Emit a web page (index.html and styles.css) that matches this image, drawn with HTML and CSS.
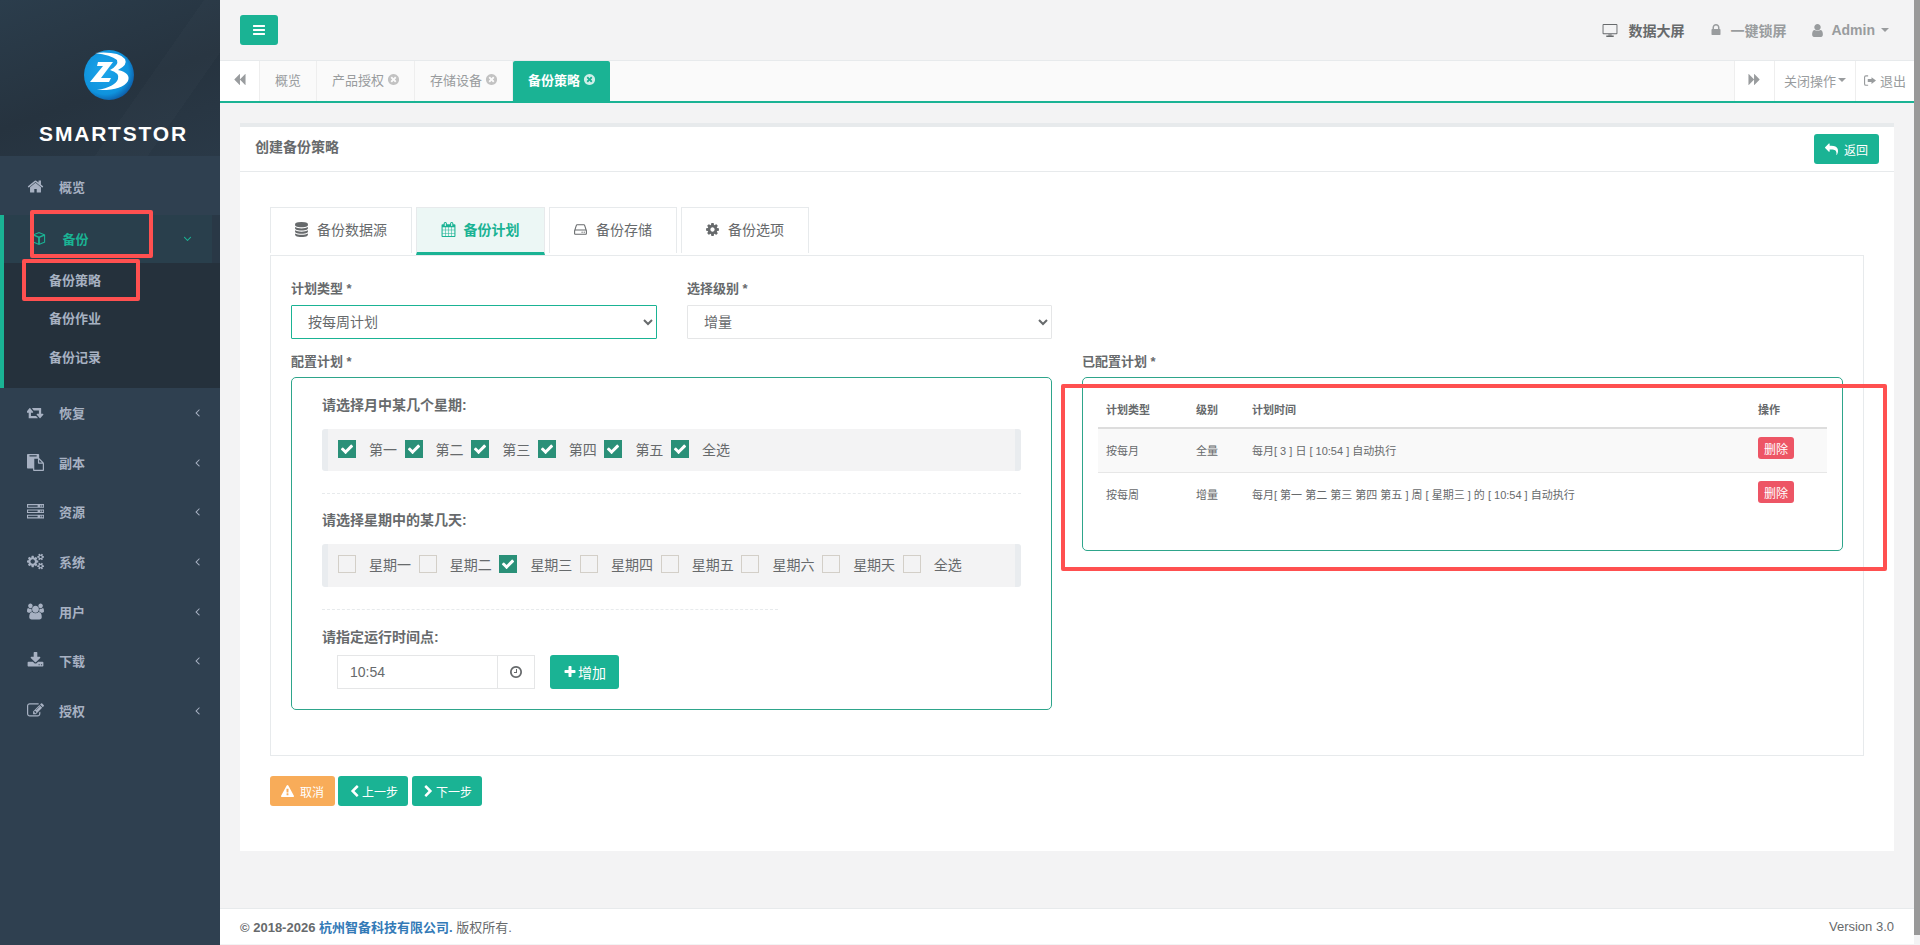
FILE: index.html
```html
<!DOCTYPE html>
<html lang="zh">
<head>
<meta charset="utf-8">
<title>SMARTSTOR</title>
<link rel="stylesheet" href="styles.css">
</head>
<body>
<svg class="defs" xmlns="http://www.w3.org/2000/svg">
  <symbol id="i-bars" viewBox="0 0 1792 1792"><path d="M1664 1344v128q0 26-19 45t-45 19h-1408q-26 0-45-19t-19-45v-128q0-26 19-45t45-19h1408q26 0 45 19t19 45zm0-512v128q0 26-19 45t-45 19h-1408q-26 0-45-19t-19-45v-128q0-26 19-45t45-19h1408q26 0 45 19t19 45zm0-512v128q0 26-19 45t-45 19h-1408q-26 0-45-19t-19-45v-128q0-26 19-45t45-19h1408q26 0 45 19t19 45z"/></symbol>
  <symbol id="i-home" viewBox="0 0 1792 1792"><path d="M1472 992v480q0 26-19 45t-45 19h-384v-384h-256v384h-384q-26 0-45-19t-19-45v-480q0-1 .5-3t.5-3l575-474 575 474q1 2 1 6zm223-69l-62 74q-8 9-21 11h-3q-13 0-21-7l-692-577-692 577q-12 8-24 7-13-2-21-11l-62-74q-8-10-7-23.500t11-21.500l719-599q32-26 76-26t76 26l244 204v-195q0-14 9-23t23-9h192q14 0 23 9t9 23v408l219 182q10 8 11 21.500t-7 23.500z"/></symbol>
  <symbol id="i-angle-left" viewBox="0 0 1792 1792"><path d="M1203 544q0 13-10 23l-393 393 393 393q10 10 10 23t-10 23l-50 50q-10 10-23 10t-23-10l-466-466q-10-10-10-23t10-23l466-466q10-10 23-10t23 10l50 50q10 10 10 23z"/></symbol>
  <symbol id="i-angle-down" viewBox="0 0 1792 1792"><path d="M1395 736q0 13-10 23l-466 466q-10 10-23 10t-23-10l-466-466q-10-10-10-23t10-23l50-50q10-10 23-10t23 10l393 393 393-393q10-10 23-10t23 10l50 50q10 10 10 23z"/></symbol>
  <symbol id="i-chevron-left" viewBox="0 0 1792 1792"><path d="M1427 301l-531 531 531 531q19 19 19 45t-19 45l-166 166q-19 19-45 19t-45-19l-742-742q-19-19-19-45t19-45l742-742q19-19 45-19t45 19l166 166q19 19 19 45t-19 45z"/></symbol>
  <symbol id="i-chevron-right" viewBox="0 0 1792 1792"><path d="M1363 877l-742 742q-19 19-45 19t-45-19l-166-166q-19-19-19-45t19-45l531-531-531-531q-19-19-19-45t19-45l166-166q19-19 45-19t45 19l742 742q19 19 19 45t-19 45z"/></symbol>
  <symbol id="i-plus" viewBox="0 0 1792 1792"><path d="M1600 736v192q0 40-28 68t-68 28h-416v416q0 40-28 68t-68 28h-192q-40 0-68-28t-28-68v-416h-416q-40 0-68-28t-28-68v-192q0-40 28-68t68-28h416v-416q0-40 28-68t68-28h192q40 0 68 28t28 68v416h416q40 0 68 28t28 68z"/></symbol>
  <symbol id="i-check" viewBox="0 0 1792 1792"><path d="M1671 566q0 40-28 68l-724 724-136 136q-28 28-68 28t-68-28l-136-136-362-362q-28-28-28-68t28-68l136-136q28-28 68-28t68 28l294 295 656-657q28-28 68-28t68 28l136 136q28 28 28 68z"/></symbol>
  <symbol id="i-user" viewBox="0 0 1792 1792"><path d="M1536 1399q0 109-62.500 187t-150.500 78h-854q-88 0-150.500-78t-62.500-187q0-85 8.500-160.500t31.500-152 58.500-131 94-89 134.500-34.500q131 128 313 128t313-128q76 0 134.500 34.500t94 89 58.500 131 31.500 152 8.500 160.500zm-256-887q0 159-112.500 271.500t-271.500 112.500-271.500-112.500-112.500-271.500 112.500-271.500 271.500-112.500 271.500 112.500 112.500 271.500z"/></symbol>
  <symbol id="i-lock" viewBox="0 0 1792 1792"><path d="M640 768h512v-192q0-106-75-181t-181-75-181 75-75 181v192zm832 96v576q0 40-28 68t-68 28h-960q-40 0-68-28t-28-68v-576q0-40 28-68t68-28h32v-192q0-184 132-316t316-132 316 132 132 316v192h32q40 0 68 28t28 68z"/></symbol>
  <symbol id="i-database" viewBox="0 0 1792 1792"><path d="M896 768q237 0 443-43t325-127v170q0 69-103 128t-280 93.500-385 34.500-385-34.500-280-93.500-103-128v-170q119 84 325 127t443 43zm0 768q237 0 443-43t325-127v170q0 69-103 128t-280 93.500-385 34.500-385-34.500-280-93.500-103-128v-170q119 84 325 127t443 43zm0-384q237 0 443-43t325-127v170q0 69-103 128t-280 93.500-385 34.500-385-34.500-280-93.500-103-128v-170q119 84 325 127t443 43zm0-1152q208 0 385 34.500t280 93.500 103 128v128q0 69-103 128t-280 93.500-385 34.500-385-34.500-280-93.500-103-128v-128q0-69 103-128t280-93.500 385-34.500z"/></symbol>
  <symbol id="i-cog" viewBox="0 0 1792 1792"><path d="M1152 896q0-106-75-181t-181-75-181 75-75 181 75 181 181 75 181-75 75-181zm512-109v222q0 12-8 23t-20 13l-185 28q-19 54-39 91 35 50 107 138 10 12 10 25t-9 23q-27 37-99 108t-94 71q-12 0-26-9l-138-108q-44 23-91 38-16 136-29 186-7 28-36 28h-222q-14 0-24.500-8.500t-11.500-21.500l-28-184q-49-16-90-37l-141 107q-10 9-25 9-14 0-25-11-126-114-165-168-7-10-7-23 0-12 8-23 15-21 51-66.500t54-70.500q-27-50-41-99l-183-27q-13-2-21-12.500t-8-23.500v-222q0-12 8-23t19-13l186-28q14-46 39-92-40-57-107-138-10-12-10-24 0-10 9-23 26-36 98.500-107.500t94.500-71.500q13 0 26 10l138 107q44-23 91-38 16-136 29-186 7-28 36-28h222q14 0 24.500 8.500t11.500 21.500l28 184q49 16 90 37l142-107q9-9 24-9 13 0 25 10 129 119 165 170 7 8 7 22 0 12-8 23-15 21-51 66.500t-54 70.500q26 50 41 98l183 28q13 2 21 12.500t8 23.500z"/></symbol>
  <symbol id="i-warning" viewBox="0 0 1792 1792"><path d="M1024 1375v-190q0-14-9.500-23.500t-22.500-9.500h-192q-13 0-22.500 9.500t-9.500 23.500v190q0 14 9.500 23.500t22.500 9.500h192q13 0 22.500-9.500t9.500-23.500zm-2-374l18-459q0-12-10-19-13-11-24-11h-220q-11 0-24 11-10 7-10 21l17 457q0 10 10 16.500t24 6.500h185q14 0 23.500-6.500t10.500-16.500zm-14-934l768 1408q35 63-2 126-17 29-46.500 46t-63.500 17h-1536q-34 0-63.500-17t-46.500-46q-37-63-2-126l768-1408q17-31 47-49t65-18 65 18 47 49z"/></symbol>
  <symbol id="i-reply" viewBox="0 0 1792 1792"><path d="M1792 1120q0 166-127 451-3 7-10.500 24t-13.500 30-13 22q-12 17-28 17-15 0-23.500-10t-8.500-25q0-9 2.500-26.500t2.500-23.500q5-68 5-123 0-101-17.500-181t-48.500-138.500-80-101-105.500-69.500-133-42.500-154-21.500-175.500-6h-224v256q0 26-19 45t-45 19-45-19l-512-512q-19-19-19-45t19-45l512-512q19-19 45-19t45 19 19 45v256h224q713 0 875 403 53 134 53 333z"/></symbol>
  <symbol id="i-close" viewBox="0 0 1792 1792"><path d="M1277 1122q0-26-19-45l-181-181 181-181q19-19 19-45 0-27-19-46l-90-90q-19-19-46-19-26 0-45 19l-181 181-181-181q-19-19-45-19-27 0-46 19l-90 90q-19 19-19 46 0 26 19 45l181 181-181 181q-19 19-19 45 0 27 19 46l90 90q19 19 46 19 26 0 45-19l181-181 181 181q19 19 45 19 27 0 46-19l90-90q19-19 19-46zm387-226q0 209-103 385.500t-279.500 279.500-385.500 103-385.500-103-279.500-279.500-103-385.500 103-385.500 279.500-279.500 385.500-103 385.500 103 279.500 279.500 103 385.500z"/></symbol>
  <symbol id="i-calendar" viewBox="0 0 1792 1792"><path d="M192 1664h288v-288h-288v288zm352 0h320v-288h-320v288zm-352-352h288v-320h-288v320zm352 0h320v-320h-320v320zm-352-384h288v-288h-288v288zm736 736h320v-288h-320v288zm-384-736h320v-288h-320v288zm768 736h288v-288h-288v288zm-384-352h320v-320h-320v320zm-352-864v-288q0-13-9.500-22.500t-22.500-9.500h-64q-13 0-22.500 9.500t-9.500 22.500v288q0 13 9.500 22.500t22.500 9.500h64q13 0 22.500-9.500t9.500-22.500zm736 864h288v-320h-288v320zm-384-384h320v-288h-320v288zm384 0h288v-288h-288v288zm32-480v-288q0-13-9.500-22.500t-22.500-9.500h-64q-13 0-22.500 9.500t-9.500 22.500v288q0 13 9.500 22.500t22.500 9.500h64q13 0 22.500-9.500t9.500-22.500zm384-64v1280q0 52-38 90t-90 38h-1408q-52 0-90-38t-38-90v-1280q0-52 38-90t90-38h128v-96q0-66 47-113t113-47h64q66 0 113 47t47 113v96h384v-96q0-66 47-113t113-47h64q66 0 113 47t47 113v96h128q52 0 90 38t38 90z"/></symbol>
  <symbol id="i-backward" viewBox="0 0 1792 1792"><path d="M1683 141q19-19 32-13t13 32v1472q0 26-13 32t-32-13l-710-710q-9-9-13-19v710q0 26-13 32t-32-13l-710-710q-19-19-19-45t19-45l710-710q19-19 32-13t13 32v710q4-10 13-19z"/></symbol>
  <symbol id="i-forward" viewBox="0 0 1792 1792"><path d="M109 1651q-19 19-32 13t-13-32v-1472q0-26 13-32t32 13l710 710q9 9 13 19v-710q0-26 13-32t32 13l710 710q19 19 19 45t-19 45l-710 710q-19 19-32 13t-13-32v-710q-4 10-13 19z"/></symbol>
  <symbol id="i-desktop" viewBox="0 0 16 14"><path d="M1 0h14q1 0 1 1v9q0 1-1 1H9.500v1.500H12V14H4v-1.500h2.500V11H1q-1 0-1-1V1q0-1 1-1zM1 1v9h14V1zM7.500 11v1.500h1V11z" fill-rule="evenodd"/></symbol>
  <symbol id="i-hdd" viewBox="0 0 1792 1792"><path d="M1168 1216q0 33-23.500 56.500t-56.500 23.500-56.500-23.500-23.500-56.500 23.500-56.500 56.500-23.500 56.500 23.500 23.500 56.500zm256 0q0 33-23.500 56.500t-56.500 23.500-56.500-23.500-23.500-56.500 23.500-56.500 56.500-23.500 56.500 23.500 23.500 56.500zm112 160v-320q0-13-9.500-22.500t-22.500-9.500h-1216q-13 0-22.500 9.500t-9.500 22.500v320q0 13 9.500 22.500t22.500 9.500h1216q13 0 22.500-9.500t9.500-22.500zm-1230-480h1180l-157-482q-4-13-16-21.500t-26-8.500h-782q-14 0-26 8.500t-16 21.500zm1358 160v320q0 66-47 113t-113 47h-1216q-66 0-113-47t-47-113v-320q0-25 16-75l197-606q17-53 63-86t101-33h782q55 0 101 33t63 86l197 606q16 50 16 75z"/></symbol>
  <symbol id="i-clock" viewBox="0 0 1792 1792"><path d="M1024 544v448q0 14-9 23t-23 9h-320q-14 0-23-9t-9-23v-64q0-14 9-23t23-9h224v-352q0-14 9-23t23-9h64q14 0 23 9t9 23zm416 352q0-148-73-273t-198-198-273-73-273 73-198 198-73 273 73 273 198 198 273 73 273-73 198-198 73-273zm224 0q0 209-103 385.500t-279.500 279.500-385.500 103-385.500-103-279.500-279.500-103-385.500 103-385.500 279.500-279.500 385.500-103 385.500 103 279.500 279.500 103 385.500z"/></symbol>
  <symbol id="i-cube" viewBox="0 0 16 16"><path d="M8 .5 15 3.500v9L8 15.500 1 12.500v-9zM3.200 3.800 8 5.800l4.800-2L8 1.900zM9 7.200v6.500l4.800-2.100V5.200zM2.300 5.200v6.400L7 13.600V7.200z" fill-rule="evenodd"/></symbol>
  <symbol id="i-retweet" viewBox="0 0 1920 1792"><path d="M1216 1520q0 13-9.500 22.500t-22.500 9.500h-960q-8 0-13.500-2t-9-7-5.500-8-3-11.500-1-11.500v-600h-192q-26 0-45-19t-19-45q0-24 15-41l320-384q19-22 49-22t49 22l320 384q15 17 15 41 0 26-19 45t-45 19h-192v384h576q16 0 25 11l160 192q7 10 7 21zm640-416q0 24-15 41l-320 384q-20 23-49 23t-49-23l-320-384q-15-17-15-41 0-26 19-45t45-19h192v-384h-576q-16 0-25-12l-160-192q-7-9-7-20 0-13 9.500-22.500t22.500-9.500h960q8 0 13.500 2t9 7 5.500 8 3 11.500 1 11.500v600h192q26 0 45 19t19 45z"/></symbol>
  <symbol id="i-files" viewBox="0 0 1792 1792"><path d="M768 1664h896v-640h-416q-40 0-68-28t-28-68v-416h-384v1152zm256-1440v-64q0-13-9.500-22.500t-22.500-9.500h-704q-13 0-22.500 9.500t-9.500 22.500v64q0 13 9.500 22.500t22.500 9.500h704q13 0 22.500-9.500t9.500-22.500zm256 672h299l-299-299v299zm512 128v672q0 40-28 68t-68 28h-960q-40 0-68-28t-28-68v-160h-544q-40 0-68-28t-28-68v-1344q0-40 28-68t68-28h1088q40 0 68 28t28 68v328q21 13 36 28l408 408q28 28 48 76t20 88z"/></symbol>
  <symbol id="i-server" viewBox="0 0 16 14"><path d="M0 0h16v3.500H0zM0 5h16v3.500H0zM0 10h16v3.500H0zM1 1h9v1.500H1zM12.500 1v1.500h1V1zM14.200 1v1.500h1V1zM1 6h9v1.500H1zM12.500 6v1.500h1V6zM14.200 6v1.500h1V6zM1 11h9v1.500H1zM12.500 11v1.500h1V11zM14.200 11v1.500h1V11z" fill-rule="evenodd"/></symbol>
  <symbol id="i-users" viewBox="0 0 1920 1792"><path d="M593 896q-162 5-265 128h-134q-82 0-138-40.500t-56-118.500q0-353 124-353 6 0 43.500 21t97.500 42.500 119 21.500q67 0 133-23-5 37-5 66 0 139 81 256zm1071 637q0 120-73 189.500t-194 69.500h-874q-121 0-194-69.500t-73-189.500q0-53 3.500-103.500t14-109 26.500-108.500 43-97.500 62-81 85.500-53.500 111.500-20q10 0 43 21.500t73 48 107 48 135 21.500 135-21.500 107-48 73-48 43-21.500q61 0 111.500 20t85.500 53.500 62 81 43 97.500 26.500 108.500 14 109 3.500 103.500zm-1024-1277q0 106-75 181t-181 75-181-75-75-181 75-181 181-75 181 75 75 181zm704 384q0 159-112.500 271.500t-271.500 112.500-271.500-112.500-112.500-271.500 112.500-271.500 271.500-112.500 271.500 112.500 112.500 271.500zm576 225q0 78-56 118.500t-138 40.500h-134q-103-123-265-128 81-117 81-256 0-29-5-66 66 23 133 23 59 0 119-21.500t97.500-42.500 43.500-21q124 0 124 353zm-128-609q0 106-75 181t-181 75-181-75-75-181 75-181 181-75 181 75 75 181z"/></symbol>
  <symbol id="i-download" viewBox="0 0 1792 1792"><path d="M1344 1344q0-26-19-45t-45-19-45 19-19 45 19 45 45 19 45-19 19-45zm256 0q0-26-19-45t-45-19-45 19-19 45 19 45 45 19 45-19 19-45zm128-224v320q0 40-28 68t-68 28h-1472q-40 0-68-28t-28-68v-320q0-40 28-68t68-28h465l135 136q58 56 136 56t136-56l136-136h464q40 0 68 28t28 68zm-325-569q17 41-14 70l-448 448q-18 19-45 19t-45-19l-448-448q-31-29-14-70 17-39 59-39h256v-448q0-26 19-45t45-19h256q26 0 45 19t19 45v448h256q42 0 59 39z"/></symbol>
  <symbol id="i-edit" viewBox="0 0 1792 1792"><path d="M888 1184l116-116-152-152-116 116v56h96v96h56zm440-720q-16-16-33 1l-350 350q-17 17-1 33t33-1l350-350q17-17 1-33zm80 594v190q0 119-84.500 203.500t-203.500 84.500h-832q-119 0-203.500-84.500t-84.500-203.500v-832q0-119 84.500-203.500t203.500-84.500h832q63 0 117 25 15 7 18 23 3 17-9 29l-49 49q-14 14-32 8-23-6-45-6h-832q-66 0-113 47t-47 113v832q0 66 47 113t113 47h832q66 0 113-47t47-113v-126q0-13 9-22l64-64q15-15 35-7t20 29zm-96-738l288 288-672 672h-288v-288zm444 132l-92 92-288-288 92-92q28-28 68-28t68 28l152 152q28 28 28 68t-28 68z"/></symbol>
  <symbol id="i-cogs" viewBox="0 0 1920 1792"><path d="M896 896q0-106-75-181t-181-75-181 75-75 181 75 181 181 75 181-75 75-181zm768 512q0-52-38-90t-90-38-90 38-38 90q0 53 37.500 90.500t90.500 37.500 90.500-37.500 37.500-90.500zm0-1024q0-52-38-90t-90-38-90 38-38 90q0 53 37.500 90.500t90.500 37.500 90.500-37.500 37.500-90.500zm-384 421v185q0 10-7 19.500t-16 10.500l-155 24q-11 35-32 76 34 48 90 115 7 11 7 20 0 12-7 19-23 30-82.500 89.500t-78.500 59.500q-11 0-21-7l-115-90q-37 19-77 31-11 108-23 155-7 24-30 24h-186q-11 0-20-7.500t-10-17.500l-23-153q-34-10-75-31l-118 89q-7 7-20 7-11 0-21-8-144-133-144-160 0-9 7-19 10-14 41-53t47-61q-23-44-35-82l-152-24q-10-1-17-9.500t-7-19.500v-185q0-10 7-19.500t16-10.500l155-24q11-35 32-76-34-48-90-115-7-11-7-20 0-12 7-20 22-30 82-89t79-59q11 0 21 7l115 90q34-18 77-32 11-108 23-154 7-24 30-24h186q11 0 20 7.500t10 17.500l23 153q34 10 75 31l118-89q8-7 20-7 11 0 21 8 144 133 144 160 0 8-7 19-12 16-42 54t-45 60q23 48 34 82l152 23q10 2 17 10.500t7 19.500zm640 533v140q0 16-149 31-12 27-30 52 51 113 51 138 0 4-4 7-122 71-124 71-8 0-46-47t-52-68q-20 2-30 2t-30-2q-14 21-52 68t-46 47q-2 0-124-71-4-3-4-7 0-25 51-138-18-25-30-52-149-15-149-31v-140q0-16 149-31 13-29 30-52-51-113-51-138 0-4 4-7 4-2 35-20t59-34 30-16q8 0 46 46.500t52 67.500q20-2 30-2t30 2q51-71 92-112l6-2q4 0 124 70 4 3 4 7 0 25-51 138 17 23 30 52 149 15 149 31zm0-1024v140q0 16-149 31-12 27-30 52 51 113 51 138 0 4-4 7-122 71-124 71-8 0-46-47t-52-68q-20 2-30 2t-30-2q-14 21-52 68t-46 47q-2 0-124-71-4-3-4-7 0-25 51-138-18-25-30-52-149-15-149-31v-140q0-16 149-31 13-29 30-52-51-113-51-138 0-4 4-7 4-2 35-20t59-34 30-16q8 0 46 46.500t52 67.500q20-2 30-2t30 2q51-71 92-112l6-2q4 0 124 70 4 3 4 7 0 25-51 138 17 23 30 52 149 15 149 31z"/></symbol>
  <symbol id="i-signout" viewBox="0 0 16 14"><path d="M5.500 0v1.500H2.500q-1 0-1 1v9q0 1 1 1h3V14H2.500Q0 14 0 11.500v-9Q0 0 2.500 0zM10 2.500 16 7l-6 4.500V9H5V5h5z"/></symbol>
</svg>

<aside class="sidebar">
  <div class="brand">
    <svg class="logo" viewBox="0 0 50 50">
      <defs>
        <radialGradient id="logo-bg" cx=".42" cy=".42" r=".62">
          <stop offset="0" stop-color="#1da5ea"/>
          <stop offset=".75" stop-color="#0f93dd"/>
          <stop offset="1" stop-color="#0e5ba6"/>
        </radialGradient>
      </defs>
      <circle cx="25" cy="25" r="25" fill="url(#logo-bg)"/>
      <path fill="#fff" d="M14 12H29L17 28H27L25 32H6L19 16H13Z"/>
      <path fill="#fff" d="M11 3Q34 1 41 9Q44 15 34 20Q47 23 44 31Q38 41 13 40Q31 37 34 29Q36 23 26 20Q35 15 33 10Q27 5 11 3Z"/>
    </svg>
    <div class="brand-name">SMARTSTOR</div>
  </div>
  <nav class="menu">
    <a class="menu-item"><svg class="ico"><use href="#i-home"/></svg><span>概览</span></a>
    <div class="menu-group">
      <a class="menu-item is-open"><svg class="ico"><use href="#i-cube"/></svg><span>备份</span><svg class="arrow"><use href="#i-angle-down"/></svg></a>
      <div class="submenu">
        <a>备份策略</a>
        <a>备份作业</a>
        <a>备份记录</a>
      </div>
    </div>
    <a class="menu-item"><svg class="ico"><use href="#i-retweet"/></svg><span>恢复</span><svg class="arrow"><use href="#i-angle-left"/></svg></a>
    <a class="menu-item"><svg class="ico"><use href="#i-files"/></svg><span>副本</span><svg class="arrow"><use href="#i-angle-left"/></svg></a>
    <a class="menu-item"><svg class="ico"><use href="#i-server"/></svg><span>资源</span><svg class="arrow"><use href="#i-angle-left"/></svg></a>
    <a class="menu-item"><svg class="ico"><use href="#i-cogs"/></svg><span>系统</span><svg class="arrow"><use href="#i-angle-left"/></svg></a>
    <a class="menu-item"><svg class="ico"><use href="#i-users"/></svg><span>用户</span><svg class="arrow"><use href="#i-angle-left"/></svg></a>
    <a class="menu-item"><svg class="ico"><use href="#i-download"/></svg><span>下载</span><svg class="arrow"><use href="#i-angle-left"/></svg></a>
    <a class="menu-item"><svg class="ico"><use href="#i-edit"/></svg><span>授权</span><svg class="arrow"><use href="#i-angle-left"/></svg></a>
  </nav>
</aside>

<div class="page">
  <header class="topbar">
    <button class="btn btn-bars"><svg><use href="#i-bars"/></svg></button>
    <ul class="top-links">
      <li class="dark"><svg class="screen"><use href="#i-desktop"/></svg>数据大屏</li>
      <li><svg class="lock"><use href="#i-lock"/></svg>一键锁屏</li>
      <li><svg class="usr"><use href="#i-user"/></svg>Admin<i class="caret"></i></li>
    </ul>
  </header>

  <div class="tabbar">
    <button class="tab-nav"><svg><use href="#i-backward"/></svg></button>
    <div class="page-tabs">
      <a>概览</a>
      <a>产品授权<svg><use href="#i-close"/></svg></a>
      <a>存储设备<svg><use href="#i-close"/></svg></a>
      <a class="active">备份策略<svg><use href="#i-close"/></svg></a>
    </div>
    <button class="tab-nav right"><svg><use href="#i-forward"/></svg></button>
    <div class="tab-action">关闭操作<i class="caret"></i></div>
    <div class="tab-action exit"><svg><use href="#i-signout"/></svg>退出</div>
  </div>

  <main class="content">
    <section class="card">
      <div class="card-title">
        <h5>创建备份策略</h5>
        <button class="btn btn-sm"><svg class="reply"><use href="#i-reply"/></svg>返回</button>
      </div>
      <div class="card-body">
        <ul class="steps">
          <li><svg><use href="#i-database"/></svg>备份数据源</li>
          <li class="active"><svg><use href="#i-calendar"/></svg>备份计划</li>
          <li><svg><use href="#i-hdd"/></svg>备份存储</li>
          <li><svg><use href="#i-cog"/></svg>备份选项</li>
        </ul>
        <div class="step-panel">
          <div class="form-cols">
            <div class="field">
              <label>计划类型 *</label>
              <select class="picked"><option>按每周计划</option></select>
            </div>
            <div class="field">
              <label>选择级别 *</label>
              <select><option>增量</option></select>
            </div>
          </div>
          <div class="form-cols boxes">
            <div class="field">
              <label>配置计划 *</label>
              <div class="box plan">
                <h4>请选择月中某几个星期:</h4>
                <div class="check-row">
                  <span class="check on"><svg><use href="#i-check"/></svg></span><em>第一</em>
                  <span class="check on"><svg><use href="#i-check"/></svg></span><em>第二</em>
                  <span class="check on"><svg><use href="#i-check"/></svg></span><em>第三</em>
                  <span class="check on"><svg><use href="#i-check"/></svg></span><em>第四</em>
                  <span class="check on"><svg><use href="#i-check"/></svg></span><em>第五</em>
                  <span class="check on"><svg><use href="#i-check"/></svg></span><em>全选</em>
                </div>
                <hr class="dash">
                <h4>请选择星期中的某几天:</h4>
                <div class="check-row days">
                  <span class="check"></span><em>星期一</em>
                  <span class="check"></span><em>星期二</em>
                  <span class="check on"><svg><use href="#i-check"/></svg></span><em>星期三</em>
                  <span class="check"></span><em>星期四</em>
                  <span class="check"></span><em>星期五</em>
                  <span class="check"></span><em>星期六</em>
                  <span class="check"></span><em>星期天</em>
                  <span class="check"></span><em>全选</em>
                </div>
                <hr class="dash short">
                <h4 class="time-title">请指定运行时间点:</h4>
                <div class="time-row">
                  <div class="time-input"><span>10:54</span><i><svg><use href="#i-clock"/></svg></i></div>
                  <button class="btn btn-add"><svg><use href="#i-plus"/></svg>增加</button>
                </div>
              </div>
            </div>
            <div class="field">
              <label>已配置计划 *</label>
              <div class="box configured">
                <table>
                  <thead>
                    <tr><th class="c1">计划类型</th><th class="c2">级别</th><th>计划时间</th><th class="c4">操作</th></tr>
                  </thead>
                  <tbody>
                    <tr class="odd"><td>按每月</td><td>全量</td><td>每月[ 3 ] 日 [ 10:54 ] 自动执行</td><td><button class="btn-del">删除</button></td></tr>
                    <tr><td>按每周</td><td>增量</td><td>每月[ 第一 第二 第三 第四 第五 ] 周 [ 星期三 ] 的 [ 10:54 ] 自动执行</td><td><button class="btn-del">删除</button></td></tr>
                  </tbody>
                </table>
              </div>
            </div>
          </div>
        </div>
        <div class="actions">
          <button class="btn btn-warn"><svg><use href="#i-warning"/></svg>取消</button>
          <button class="btn btn-step"><svg><use href="#i-chevron-left"/></svg>上一步</button>
          <button class="btn btn-step"><svg><use href="#i-chevron-right"/></svg>下一步</button>
        </div>
      </div>
    </section>
  </main>

  <footer class="footer">
    <div><b>© 2018-2026 <a>杭州智备科技有限公司.</a></b> 版权所有.</div>
    <div>Version 3.0</div>
  </footer>
</div>

<!-- annotations drawn on top of the screenshot -->
<div class="mark mark-menu"></div>
<div class="mark mark-sub"></div>
<div class="mark mark-table"></div>
<div class="scroll-thumb"></div>
</body>
</html>
```

FILE: styles.css
```css
* {
  box-sizing: border-box;
}

html, body {
  height: 100%;
}

body {
  margin: 0;
  display: flex;
  overflow: hidden;
  background: #f3f3f4;
  color: #676a6c;
  font-family: "Liberation Sans", "Noto Sans CJK SC", sans-serif;
  font-size: 13px;
}

.defs {
  position: absolute;
  width: 0;
  height: 0;
}

svg {
  fill: currentColor;
}

ul {
  list-style: none;
  margin: 0;
  padding: 0;
}

/* sidebar */
.sidebar {
  flex: none;
  width: 220px;
  background: #2f4050;
}

.brand {
  height: 156px;
  padding-top: 50px;
  color: #fff;
  background:
    linear-gradient(125deg, transparent 62%, rgba(255, 255, 255, .015) 62%, rgba(255, 255, 255, .015) 78%, transparent 78%),
    linear-gradient(160deg, #2b3d4c 0%, #26333f 55%, #2a3947 100%);
}

.logo {
  display: block;
  width: 50px;
  height: 50px;
  margin-left: 84px;
}

.brand-name {
  margin-top: 22px;
  padding-left: 7px;
  text-align: center;
  font-size: 21px;
  line-height: 24px;
  font-weight: 700;
  letter-spacing: 1.800px;
}

.menu {
  padding-top: 6px;
}

.menu-item {
  display: flex;
  align-items: center;
  height: 49.600px;
  padding: 0 16px 0 27px;
  color: #a7b1c2;
  font-weight: 700;
}

.menu-item span {
  width: 26px;
  white-space: nowrap;
}

.ico {
  flex: none;
  width: 17px;
  height: 17px;
  margin-right: 15px;
}

.arrow {
  width: 13px;
  height: 13px;
  margin-left: auto;
}

.menu-group {
  margin-top: 3.400px;
  border-left: 4px solid #1ab394;
  background: #293846;
}

.menu-item.is-open {
  height: 48px;
  margin-right: 8px;
  padding-left: 29px;
  padding-right: 18px;
  color: #1ab394;
  background: #293f4c;
}

.is-open .ico {
  width: 14px;
  margin-left: -1px;
  margin-right: 16.500px;
}

.submenu {
  height: 125px;
  background: #25313c;
}

.submenu a {
  display: block;
  height: 38.500px;
  padding-left: 45px;
  line-height: 36px;
  color: #a7b1c2;
  font-weight: 700;
}

/* top bar */
.page {
  flex: 1;
  min-width: 0;
  display: flex;
  flex-direction: column;
  padding-right: 6px;
}

.topbar {
  flex: none;
  height: 60px;
  display: flex;
  align-items: center;
  justify-content: space-between;
  padding: 0 20px;
}

.btn {
  display: inline-flex;
  align-items: center;
  justify-content: center;
  border: 0;
  border-radius: 3px;
  background: #1ab394;
  color: #fff;
  font: inherit;
  padding: 0;
}

.btn-bars {
  width: 38px;
  height: 30px;
}

.btn-bars svg {
  width: 14px;
  height: 14px;
}

.top-links {
  display: flex;
  align-items: center;
  font-weight: 700;
  color: #999c9e;
  gap: 24px;
  padding-right: 5px;
}

.top-links li {
  display: flex;
  align-items: center;
  font-size: 14px;
  white-space: nowrap;
}

.top-links .dark {
  margin-right: 1px;
  color: #676a6c;
}

.screen {
  width: 16px;
  height: 13px;
  margin-right: 10px;
}

.lock {
  width: 14px;
  height: 14px;
  margin-right: 7px;
}

.usr {
  width: 15px;
  height: 15px;
  margin-right: 6px;
}

.caret {
  display: inline-block;
  margin-left: 6px;
  border-top: 4px solid currentColor;
  border-left: 4px solid transparent;
  border-right: 4px solid transparent;
}

/* page tabs */
.tabbar {
  flex: none;
  display: flex;
  height: 43px;
  background: #fafafa;
  border-top: 1px solid #e7eaec;
  border-bottom: 2px solid #1ab394;
  font-size: 13px;
  color: #999c9e;
}

.tab-nav {
  flex: none;
  width: 40px;
  border: 0;
  border-right: 1px solid #eeeeee;
  background: #fff;
  color: #999c9e;
  padding: 0;
}

.tab-nav.right {
  border-right: 0;
  border-left: 1px solid #eeeeee;
}

.tab-nav svg {
  width: 13px;
  height: 13px;
}

.page-tabs {
  flex: 1;
  display: flex;
}

.page-tabs a {
  display: flex;
  align-items: center;
  padding: 0 15px 3px;
  border-right: 1px solid #eeeeee;
  white-space: nowrap;
}

.page-tabs a svg {
  width: 13px;
  height: 13px;
  margin-left: 3px;
  margin-right: -1px;
  color: #c2c2c2;
}

.page-tabs a.active {
  background: #1ab394;
  color: #fff;
  font-weight: 700;
  border-right: 0;
  border-radius: 2px 2px 0 0;
}

.page-tabs a.active svg {
  color: #cfeee8;
}

.tab-action {
  flex: none;
  display: flex;
  align-items: center;
  padding: 0 9px 2px;
  background: #fff;
  border-left: 1px solid #eeeeee;
  white-space: nowrap;
}

.tab-action .caret {
  margin-left: 2px;
}

.tab-action.exit {
  padding: 0 8px 2px;
}

.tab-action.exit svg {
  width: 12px;
  height: 11px;
  margin-right: 4px;
}

/* content */
.content {
  flex: 1;
  min-height: 0;
  padding: 20px 20px 0;
}

.card {
  height: 728px;
  background: #fff;
  border-top: 4px solid #e7eaec;
}

.card-title {
  display: flex;
  align-items: center;
  justify-content: space-between;
  height: 45px;
  padding: 0 15px;
  border-bottom: 1px solid #e7eaec;
}

.card-title h5 {
  margin: 0;
  font-size: 14px;
  font-weight: 700;
  position: relative;
  top: -3px;
}

.btn-sm {
  width: 65px;
  height: 30px;
  font-size: 12px;
}

.reply {
  width: 13px;
  height: 13px;
  margin-right: 6px;
}

.card-body {
  padding: 35px 30px 0;
}

.steps {
  display: flex;
  align-items: flex-start;
  gap: 4px;
  height: 48px;
  font-size: 14px;
}

.steps li {
  display: flex;
  align-items: center;
  justify-content: center;
  width: 142px;
  height: 46px;
  padding: 0 1px 3px 0;
  border: 1px solid #e7eaec;
  border-bottom: 0;
  white-space: nowrap;
}

.steps li:nth-child(2) {
  width: 129px;
}

.steps li:nth-child(3),
.steps li:nth-child(4) {
  width: 128px;
}

.steps svg {
  width: 15px;
  height: 15px;
  margin-right: 8px;
}

.steps li.active {
  height: 48px;
  padding-bottom: 2px;
  background: #ecf7f5;
  color: #1ab394;
  font-weight: 700;
  border-bottom: 3px solid #1ab394;
}

.step-panel {
  height: 501px;
  padding: 25px 20px 0;
  border: 1px solid #e7eaec;
}

.form-cols {
  display: grid;
  grid-template-columns: 366px 365px;
  column-gap: 30px;
}

.form-cols.boxes {
  grid-template-columns: 761px 761px;
  column-gap: 30px;
  margin-top: 15px;
}

.field label {
  display: block;
  height: 16px;
  margin-bottom: 7px;
  line-height: 16px;
  font-size: 13px;
  font-weight: 700;
}

.form-cols:first-child label {
  margin-bottom: 8px;
}

select {
  display: block;
  width: 100%;
  height: 34px;
  padding: 0 12px;
  background: #fff;
  border: 1px solid #e5e6e7;
  border-radius: 1px;
  color: #676a6c;
  font: 14px "Liberation Sans", "Noto Sans CJK SC", sans-serif;
  outline: 0;
}

select.picked {
  border-color: #1ab394;
}

.box {
  border: 1px solid #1ab394;
  border-radius: 5px;
}

.plan {
  height: 333px;
  padding: 17px 30px 0;
  border-color: #2ea58b;
}

.plan h4 {
  margin: 0 0 14px;
  font-size: 14px;
  line-height: 20px;
  font-weight: 700;
}

.check-row {
  display: flex;
  align-items: center;
  height: 42px;
  width: 699px;
  padding: 0 0 3px 10px;
  background: #f3f3f4;
  border-left: 6px solid #e9ecef;
  border-right: 6px solid #e9ecef;
  border-radius: 3px;
}

.check-row.days {
  height: 43px;
}

.check {
  flex: none;
  display: flex;
  align-items: center;
  justify-content: center;
  width: 18px;
  height: 18px;
  background: #f3f3f4;
  border: 1px solid #d3cfc8;
}

.check.on {
  background: #2a9078;
  border-color: #2a9078;
  color: #fff;
}

.check svg {
  width: 14px;
  height: 14px;
}

.check-row em {
  font-style: normal;
  width: 48.600px;
  padding-left: 13px;
  font-size: 14px;
  white-space: nowrap;
}

.check-row.days em {
  width: 62.700px;
}

.dash {
  width: 699px;
  height: 0;
  margin: 22px 0 16px;
  border: 0;
  border-top: 1px dashed #e7eaec;
}

.dash.short {
  width: 456px;
  margin-bottom: 17px;
}

.plan h4.time-title {
  margin-bottom: 8px;
}

.time-row {
  display: flex;
  gap: 15px;
  padding-left: 15px;
}

.time-input {
  display: flex;
  width: 198px;
  height: 34px;
  border: 1px solid #e5e6e7;
  font-size: 14px;
}

.time-input span {
  flex: 1;
  padding-left: 12px;
  line-height: 32px;
}

.time-input i {
  display: flex;
  align-items: center;
  justify-content: center;
  width: 37px;
  border-left: 1px solid #e5e6e7;
}

.time-input svg {
  width: 14px;
  height: 14px;
}

.btn-add {
  width: 69px;
  height: 34px;
  font-size: 14px;
}

.btn-add svg {
  width: 14px;
  height: 14px;
  margin-right: 1px;
}

.configured {
  height: 174px;
  padding: 14px 15px 0;
  border-color: #2ea58b;
}

table {
  width: 100%;
  border-collapse: collapse;
  font-size: 11px;
}

th {
  height: 36px;
  padding: 0 8px 2px;
  text-align: left;
  font-weight: 700;
  border-bottom: 2px solid #dddddd;
}

td {
  height: 44px;
  padding: 0 8px;
  border-bottom: 1px solid #e7e7e7;
}

tbody tr:last-child td {
  border-bottom: 0;
}

tr.odd {
  background: #f9f9f9;
}

.c1 {
  width: 90px;
}

.c2 {
  width: 56px;
}

.c4 {
  width: 77px;
}

.btn-del {
  display: block;
  width: 36px;
  height: 22px;
  margin-bottom: 4px;
  padding: 0;
  border: 0;
  border-radius: 3px;
  background: #ed5565;
  color: #fff;
  font: 12px "Liberation Sans", "Noto Sans CJK SC", sans-serif;
}

.actions {
  display: flex;
  gap: 3px;
  margin-top: 20px;
}

.actions .btn {
  height: 30px;
  font-size: 12px;
}

.actions svg {
  width: 13px;
  height: 13px;
  margin-right: 1px;
}

.btn-warn {
  width: 65px;
}

.actions .btn-warn {
  background: #f8ac59;
}

.actions .btn-warn svg {
  margin-right: 6px;
}

.btn-step {
  width: 70px;
}

.btn-step:last-child {
  margin-left: 1px;
}

/* footer */
.footer {
  flex: none;
  display: flex;
  align-items: center;
  justify-content: space-between;
  height: 36px;
  margin-bottom: 1px;
  padding: 0 20px;
  background: #fff;
  border-top: 1px solid #e7eaec;
  font-size: 13px;
}

.footer a {
  color: #337ab7;
}

/* red marks and page scrollbar sit above everything */
.mark {
  position: absolute;
  border: 4px solid #ff5050;
  border-radius: 2px;
}

.mark-menu {
  left: 30px;
  top: 210px;
  width: 123px;
  height: 48px;
}

.mark-sub {
  left: 22px;
  top: 259px;
  width: 118px;
  height: 42px;
}

.mark-table {
  left: 1061px;
  top: 384px;
  width: 826px;
  height: 187px;
}

.scroll-thumb {
  position: absolute;
  right: 0;
  top: 0;
  width: 6px;
  height: 935px;
  background: #999999;
}
```
